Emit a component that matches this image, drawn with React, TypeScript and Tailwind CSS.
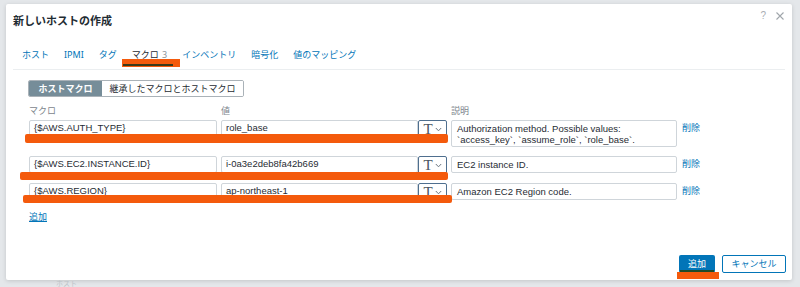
import React from "react";

const JP = { fontFamily: '"Noto Sans", "Noto Sans CJK JP", sans-serif' };

function TBtn() {
  return (
    <div className="flex h-[18px] w-[29px] shrink-0 items-center justify-center gap-[2px] rounded-[2px] border border-[#4f6f8f] bg-white">
      <span className="text-[15px] leading-none text-[#4b5560]" style={{ fontFamily: '"Liberation Serif", serif' }}>T</span>
      <svg width="7" height="5" viewBox="0 0 7 5" className="mt-[1px]">
        <path d="M0.8 1 L3.5 3.8 L6.2 1" fill="none" stroke="#6b7680" strokeWidth="1" />
      </svg>
    </div>
  );
}

function Row({ macro, value, desc, tall }: { macro: string; value: string; desc: string[]; tall?: boolean }) {
  return (
    <div className="flex items-start">
      <div className="flex h-[17px] w-[188px] items-center rounded-[2px] border border-[#cfd5da] px-[4px] text-[9.5px] text-[#1f2c33]">{macro}</div>
      <div className="ml-[4px] flex h-[17px] w-[197px] items-center rounded-[2px] border border-[#cfd5da] px-[4px] text-[9.5px] text-[#1f2c33]">{value}</div>
      <TBtn />
      <div className={`ml-[4px] flex w-[226px] flex-col justify-center rounded-[2px] border border-[#cfd5da] px-[5px] text-[9.5px] leading-[11px] text-[#1f2c33] ${tall ? "h-[27px]" : "h-[17px]"}`}>
        {desc.map((d, i) => (
          <div key={i}>{d}</div>
        ))}
      </div>
      <div className="ml-[5px] mt-[2px] text-[9px] leading-[12px] text-[#0275b8]" style={JP}>削除</div>
    </div>
  );
}

export default function App() {
  const tabs = ["ホスト", "IPMI", "タグ"];
  const tabs2 = ["インベントリ", "暗号化", "値のマッピング"];
  return (
    <div className="relative h-[287px] w-[800px] overflow-hidden bg-[#e4e7ea] pl-[6px] pt-[4px]" style={{ fontFamily: '"Liberation Sans", "Noto Sans CJK JP", sans-serif' }}>
      <div className="relative flex h-[276px] w-[786px] flex-col rounded-[2px] bg-white shadow-[0_1px_4px_rgba(0,0,0,0.15)]">
        {/* header */}
        <div className="flex h-[32px] items-center justify-between pl-[7px] pr-[8px]">
          <div className="mt-[2px] text-[11px] font-bold text-[#1f2c33]" style={JP}>新しいホストの作成</div>
          <div className="-mt-[9px] flex items-center gap-[10px] text-[#a8aeb3]">
            <span className="text-[10px]">?</span>
            <svg width="8" height="8" viewBox="0 0 8 8">
              <path d="M0.5 0.5 L7.5 7.5 M7.5 0.5 L0.5 7.5" stroke="#a0a6ab" strokeWidth="1.1" />
            </svg>
          </div>
        </div>
        {/* tabs */}
        <div className="mx-[7px] mt-[10px] flex h-[24px] items-start gap-[15px] border-b border-[#ebeef0] pl-[9px] pt-[1px] text-[9px] leading-[16px] text-[#0275b8]" style={JP}>
          {tabs.map((t) => (
            <span key={t}>{t}</span>
          ))}
          <span className="text-[#1f2c33]">
            マクロ <span className="ml-[1px] text-[#8a939a]">3</span>
          </span>
          {tabs2.map((t) => (
            <span key={t}>{t}</span>
          ))}
        </div>
        {/* segmented */}
        <div className="ml-[22px] mt-[10px] flex h-[17px] w-[216px] overflow-hidden rounded-[2px] border border-[#aab2b8] text-[9px]" style={JP}>
          <div className="flex w-[73px] items-center justify-center bg-[#768d99] font-bold text-white">ホストマクロ</div>
          <div className="flex flex-1 items-center justify-center bg-white text-[#1f2c33]">継承したマクロとホストマクロ</div>
        </div>
        {/* labels */}
        <div className="ml-[23px] mt-[8px] flex text-[9px] leading-[12px] text-[#7d868d]" style={JP}>
          <span className="w-[192px]">マクロ</span>
          <span className="w-[230px]">値</span>
          <span>説明</span>
        </div>
        <div className="ml-[23px] mt-[3px] flex flex-col gap-[9px]">
          <Row macro="{$AWS.AUTH_TYPE}" value="role_base" desc={["Authorization method. Possible values:", "`access_key`, `assume_role`, `role_base`."]} tall />
          <Row macro="{$AWS.EC2.INSTANCE.ID}" value="i-0a3e2deb8fa42b669" desc={["EC2 instance ID."]} />
          <Row macro="{$AWS.REGION}" value="ap-northeast-1" desc={["Amazon EC2 Region code."]} />
        </div>
        <div className="ml-[23px] mt-[10px] text-[9px] leading-[12px] text-[#0275b8] underline" style={JP}>追加</div>
        {/* footer */}
        <div className="mt-auto mb-[7px] mr-[6px] flex justify-end gap-[7px] text-[9px]" style={JP}>
          <div className="flex h-[18px] w-[36px] items-center justify-center rounded-[2px] bg-[#0275b8] text-white">追加</div>
          <div className="flex h-[18px] w-[64px] items-center justify-center rounded-[2px] border border-[#0275b8] bg-white text-[#0275b8]">キャンセル</div>
        </div>
      </div>
      {/* faint background text */}
      <div className="absolute left-[56px] top-[279px] text-[7px] text-[#bcc3c8]" style={JP}>ホスト</div>
      {/* annotations */}
      <div className="absolute left-[122px] top-[59px] h-[8px] w-[58px] bg-[#f45a0c]" />
      <div className="absolute left-[123px] top-[64px] h-[2px] w-[50px] bg-[#3a3a1a]" />
      <div className="absolute left-[25px] top-[134px] h-[9px] w-[423px] rounded-[2px] bg-[#f45a0c]" />
      <div className="absolute left-[20px] top-[172px] h-[8px] w-[428px] rounded-[2px] bg-[#f45a0c]" />
      <div className="absolute left-[23px] top-[195px] h-[8px] w-[429px] rounded-[2px] bg-[#f45a0c]" />
      <div className="absolute left-[677px] top-[272px] h-[7px] w-[42px] bg-[#f45a0c]" />
      <div className="absolute left-[680px] top-[270px] h-[2px] w-[34px] bg-[#1d4a2a]" />
    </div>
  );
}
